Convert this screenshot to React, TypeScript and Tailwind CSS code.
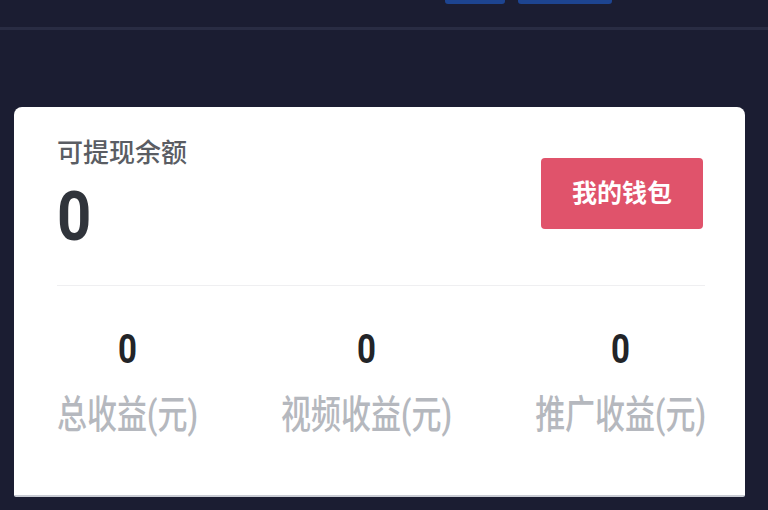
import React from "react";

const stats = [
  { value: "0", label: "总收益(元)" },
  { value: "0", label: "视频收益(元)" },
  { value: "0", label: "推广收益(元)" },
];

export default function App() {
  return (
    <div
      className="w-[768px] h-[510px] overflow-hidden bg-[#1b1d32] flex flex-col"
      style={{ fontFamily: '"Roboto", "Noto Sans CJK SC", sans-serif' }}
    >
      <header className="h-[30px] shrink-0 border-b-[3px] border-[#292c43] flex items-start pl-[445px] gap-[13px]">
        <div className="w-[60px] h-[4px] rounded-b-[3px] bg-[#1d4490]" />
        <div className="w-[94px] h-[4px] rounded-b-[3px] bg-[#1d4490]" />
      </header>

      <main className="flex-1 pt-[77px] pl-[14px]">
        <section className="w-[731px] h-[390px] rounded-t-[8px] rounded-b-[2px] bg-white border-b-2 border-[#c9ccd4] px-[43px] pt-[33px]">
          <div className="flex items-center justify-between">
            <div className="flex flex-col">
              <div className="text-[26px] leading-none font-medium text-[#5a5d63]">可提现余额</div>
              <div className="mt-[17px] text-[68px] leading-none font-bold text-[#30343b] scale-x-[0.88] origin-left">0</div>
            </div>
            <button className="w-[162px] h-[71px] mr-[-1px] rounded-[4px] bg-[#e0536b] text-white text-[25px] font-bold leading-none mt-[-4px]">
              我的钱包
            </button>
          </div>

          <div className="mt-[34px] h-px w-[648px] bg-[#efeff1]" />

          <div className="flex justify-between w-[649px] pt-[46px]">
            {stats.map((s) => (
              <div key={s.label} className="flex flex-col items-center">
                <div className="text-[33px] leading-none font-bold text-[#222428] scale-y-[1.26]">
                  {s.value}
                </div>
                <div className="mt-[35px] text-[30px] leading-none font-medium text-[#b5b8be] scale-y-[1.3]">
                  {s.label}
                </div>
              </div>
            ))}
          </div>
        </section>
      </main>
    </div>
  );
}
